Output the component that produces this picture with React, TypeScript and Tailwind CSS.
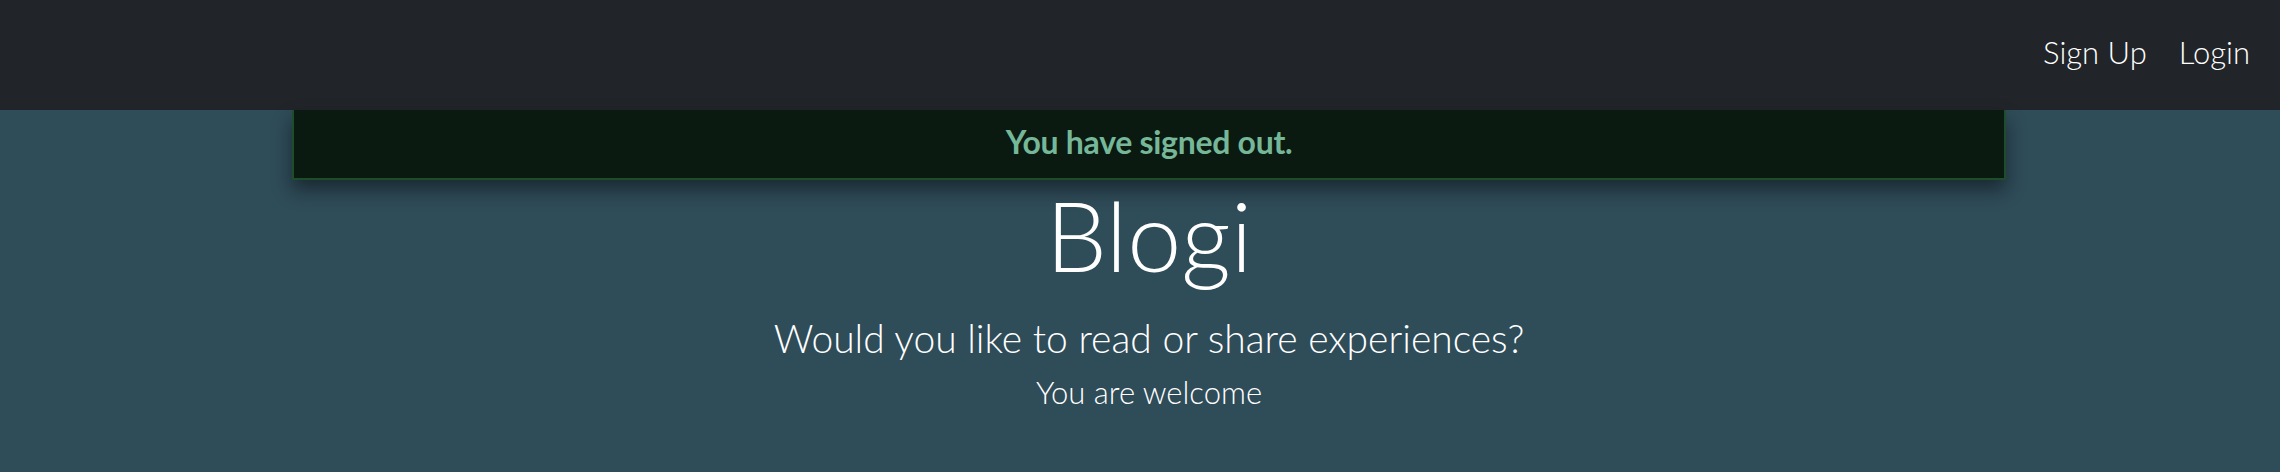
import React from "react";

export default function App() {
  return (
    <div className="min-h-[472px] w-full bg-[#2f4c59] font-['Lato','Liberation_Sans',sans-serif] text-white">
      <nav className="flex h-[110px] items-start justify-end gap-[32px] bg-[#212529] pr-[30px] pt-[37px]">
        <a className="text-[31px] font-light leading-none text-white">Sign Up</a>
        <a className="text-[31px] font-light leading-none text-white">Login</a>
      </nav>
      <div className="ml-[292px] w-[1714px]">
        <div className="box-border h-[70px] border-x-2 border-b-2 border-[#1e4d2c] bg-[#0b1a10] pt-[16px] text-center text-[32px] font-bold leading-[32px] tracking-[-0.3px] text-[#75b798] shadow-[0_10px_18px_rgba(0,0,0,0.45)]">
          You have signed out.
        </div>
      </div>
      <div className="flex flex-col items-center pl-[18px]">
        <h1 className="mt-[6px] text-[97px] font-light leading-none">Blogi</h1>
        <p className="mt-[36px] text-[39px] font-light leading-none">Would you like to read or share experiences?</p>
        <p className="mt-[19px] text-[31px] font-light leading-none">You are welcome</p>
      </div>
    </div>
  );
}
